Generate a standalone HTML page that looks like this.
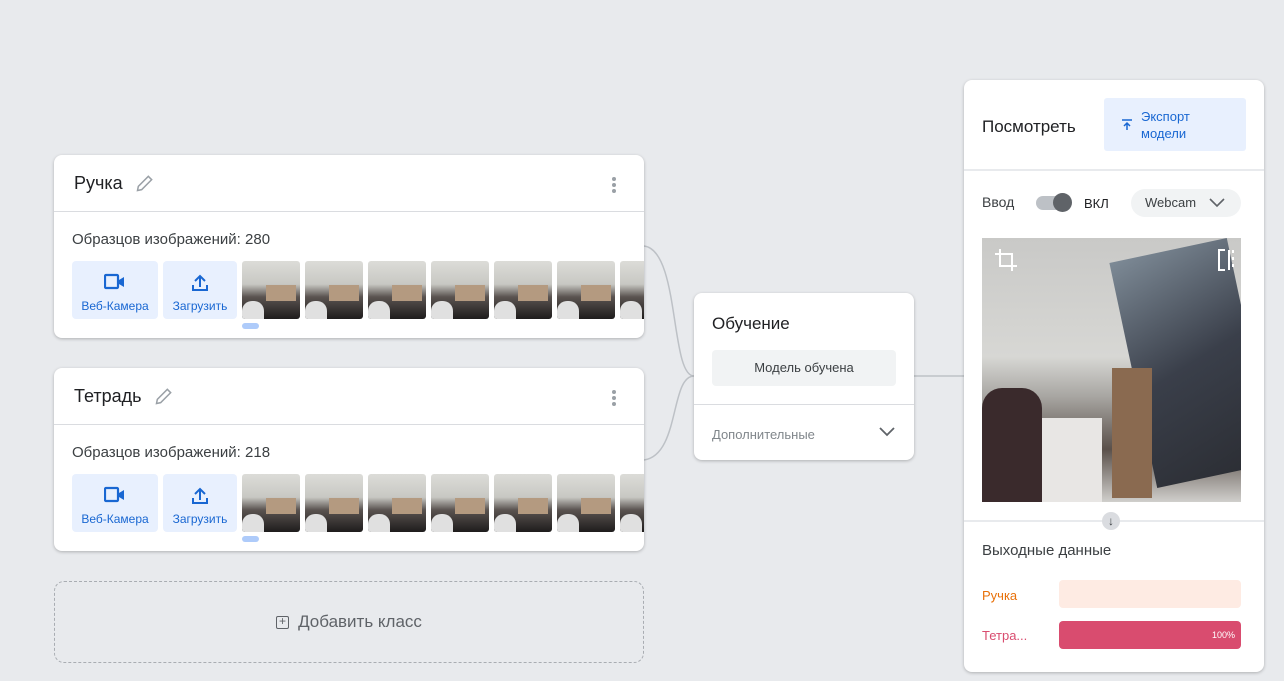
<!DOCTYPE html>
<html><head><meta charset="utf-8"><style>
*{box-sizing:border-box;margin:0;padding:0}
body{width:1284px;height:681px;background:#e8eaed;font-family:"Liberation Sans",sans-serif;position:relative;overflow:hidden;color:#202124}
.card{position:absolute;background:#fff;border-radius:8px;box-shadow:0 1px 3px rgba(0,0,0,.25)}
.cls{left:54px;width:590px;height:183px}
.hd{height:57px;border-bottom:1px solid #dadce0;padding:0 20px;display:flex;align-items:center;font-size:18px}
.dots{position:absolute;right:28px;top:22px;width:4px}
.dots i{display:block;width:4px;height:4px;border-radius:2px;background:#9aa0a6;margin-bottom:2px}
.cnt{position:absolute;left:18px;top:76px;font-size:15px;color:#3c4043}
.btn{position:absolute;top:106px;height:58px;background:#e8f0fe;border-radius:4px;color:#1967d2;font-size:12px;text-align:center}
.btn span{position:absolute;bottom:6px;left:0;right:0}
.thumbs{position:absolute;left:188px;top:106px;width:402px;height:58px;overflow:hidden;white-space:nowrap}
.th{display:inline-block;width:58px;height:58px;border-radius:3px;margin-right:5px;background:linear-gradient(180deg,#dcdcd8 0%,#c8c8c3 40%,#5a5350 62%,#1e1c1c 100%);position:relative;overflow:hidden}
.th:after{content:"";position:absolute;left:24px;top:24px;width:30px;height:16px;background:#b49a80}
.th:before{content:"";position:absolute;left:0;top:40px;width:22px;height:18px;background:#e0e0e0;border-radius:10px 10px 0 0}
.ind{position:absolute;left:188px;top:168px;width:17px;height:6px;border-radius:3px;background:#aecbfa}
</style></head><body>
<svg style="position:absolute;left:0;top:0" width="1284" height="681"><path d="M644 246 C680 250,670 376,694 376 M644 460 C680 455,670 376,694 376 M914 376 L964 376" stroke="#bdc1c6" stroke-width="1.5" fill="none"/></svg>

<div class="card cls" style="top:155px">
<div class="hd">Ручка <svg style="margin-left:12px" width="20" height="20" viewBox="0 0 24 24"><path d="M3 21l1-5L16 4l4 4L8 20z" fill="none" stroke="#9aa0a6" stroke-width="1.8"/></svg></div>
<div class="dots"><i></i><i></i><i></i></div>
<div class="cnt">Образцов изображений: 280</div>
<div class="btn" style="left:18px;width:86px"><svg style="margin-top:12px" width="22" height="18" viewBox="0 0 22 18"><rect x="1" y="2" width="13" height="13" rx="1" fill="none" stroke="#1967d2" stroke-width="2.2"/><path d="M15 7l5-3v10l-5-3z" fill="#1967d2"/></svg><span>Веб-Камера</span></div>
<div class="btn" style="left:109px;width:74px"><svg style="margin-top:12px" width="20" height="20" viewBox="0 0 20 20"><path d="M10 14V3M5 8l5-5 5 5M3 12v5h14v-5" fill="none" stroke="#1967d2" stroke-width="2"/></svg><span>Загрузить</span></div>
<div class="thumbs"><div class="th"></div><div class="th"></div><div class="th"></div><div class="th"></div><div class="th"></div><div class="th"></div><div class="th"></div></div>
<div class="ind"></div>
</div>

<div class="card cls" style="top:368px">
<div class="hd">Тетрадь <svg style="margin-left:12px" width="20" height="20" viewBox="0 0 24 24"><path d="M3 21l1-5L16 4l4 4L8 20z" fill="none" stroke="#9aa0a6" stroke-width="1.8"/></svg></div>
<div class="dots"><i></i><i></i><i></i></div>
<div class="cnt">Образцов изображений: 218</div>
<div class="btn" style="left:18px;width:86px"><svg style="margin-top:12px" width="22" height="18" viewBox="0 0 22 18"><rect x="1" y="2" width="13" height="13" rx="1" fill="none" stroke="#1967d2" stroke-width="2.2"/><path d="M15 7l5-3v10l-5-3z" fill="#1967d2"/></svg><span>Веб-Камера</span></div>
<div class="btn" style="left:109px;width:74px"><svg style="margin-top:12px" width="20" height="20" viewBox="0 0 20 20"><path d="M10 14V3M5 8l5-5 5 5M3 12v5h14v-5" fill="none" stroke="#1967d2" stroke-width="2"/></svg><span>Загрузить</span></div>
<div class="thumbs"><div class="th"></div><div class="th"></div><div class="th"></div><div class="th"></div><div class="th"></div><div class="th"></div><div class="th"></div></div>
<div class="ind"></div>
</div>

<div style="position:absolute;left:54px;top:581px;width:590px;height:82px;border:1.5px dashed #a9adb2;border-radius:10px;display:flex;align-items:center;justify-content:center;font-size:17px;color:#5f6368"><span style="display:inline-block;width:13px;height:13px;border:1.5px solid #5f6368;border-radius:2px;margin-right:9px;font-size:12px;line-height:9px;text-align:center">+</span>Добавить класс</div>

<div class="card" style="left:694px;top:293px;width:220px;height:167px">
<div style="position:absolute;left:18px;top:21px;font-size:17px">Обучение</div>
<div style="position:absolute;left:18px;top:57px;width:184px;height:36px;background:#f1f3f4;border-radius:4px;font-size:13px;color:#3c4043;text-align:center;line-height:36px">Модель обучена</div>
<div style="position:absolute;left:0;right:0;top:111px;border-top:1px solid #dadce0"></div>
<div style="position:absolute;left:18px;top:134px;font-size:13px;color:#80868b">Дополнительные</div>
<svg style="position:absolute;right:18px;top:133px" width="18" height="12" viewBox="0 0 18 12"><path d="M2 2l7 7 7-7" fill="none" stroke="#5f6368" stroke-width="1.8"/></svg>
</div>

<div class="card" style="left:964px;top:80px;width:300px;height:592px">
<div style="position:absolute;left:18px;top:37px;font-size:17px">Посмотреть</div>
<div style="position:absolute;left:140px;top:18px;width:142px;height:53px;background:#e8f0fe;border-radius:3px;color:#1967d2;font-size:13px"><svg style="position:absolute;left:17px;top:21px" width="12" height="12" viewBox="0 0 12 12"><path d="M1 1h10M6 11V4M3 7l3-3 3 3" fill="none" stroke="#1967d2" stroke-width="1.5"/></svg><div style="position:absolute;left:37px;top:10px;line-height:17px">Экспорт<br>модели</div></div>
<div style="position:absolute;left:0;right:0;top:89px;border-top:2px solid #e8eaed"></div>
<div style="position:absolute;left:18px;top:114px;font-size:14px;color:#3c4043">Ввод</div>
<div style="position:absolute;left:72px;top:116px;width:34px;height:14px;border-radius:7px;background:#bdc1c6"></div>
<div style="position:absolute;left:89px;top:113px;width:19px;height:19px;border-radius:50%;background:#5f6368"></div>
<div style="position:absolute;left:120px;top:116px;font-size:13px">ВКЛ</div>
<div style="position:absolute;left:167px;top:109px;width:110px;height:28px;border-radius:14px;background:#f1f3f4;font-size:13px;color:#3c4043;line-height:28px;padding-left:14px">Webcam<svg style="position:absolute;right:16px;top:9px" width="16" height="10" viewBox="0 0 16 10"><path d="M1 1l7 7 7-7" fill="none" stroke="#5f6368" stroke-width="1.6"/></svg></div>
<div style="position:absolute;left:18px;top:158px;width:259px;height:264px;overflow:hidden;background:linear-gradient(180deg,#c9c9c7 0%,#d7d7d4 45%,#a8a6a2 60%,#5a504a 80%,#d0cfcc 100%)">
<div style="position:absolute;left:150px;top:10px;width:120px;height:230px;background:linear-gradient(160deg,#7d8a96,#3a3f4a 50%,#2b2d33);transform:rotate(-12deg)"></div>
<div style="position:absolute;left:130px;top:130px;width:40px;height:130px;background:#8a6a50"></div>
<div style="position:absolute;left:0;top:150px;width:60px;height:114px;background:#3a2a2c;border-radius:20px 20px 0 0"></div>
<div style="position:absolute;left:60px;top:180px;width:60px;height:84px;background:#e8e6e4"></div>
<svg style="position:absolute;left:12px;top:10px" width="24" height="24" viewBox="0 0 24 24"><path d="M6 1v17h17M1 6h17v17" fill="none" stroke="#fff" stroke-width="2"/></svg>
<svg style="position:absolute;right:4px;top:10px" width="20" height="24" viewBox="0 0 20 24"><path d="M8 2H2v20h6M12 2v20M16 2v3M16 9v3M16 16v3" fill="none" stroke="#fff" stroke-width="2"/></svg>
</div>
<div style="position:absolute;left:0;right:0;top:440px;border-top:2px solid #e8eaed"></div>
<div style="position:absolute;left:138px;top:432px;width:18px;height:18px;border-radius:50%;background:#dadce0;text-align:center;font-size:12px;line-height:18px;color:#3c4043">↓</div>
<div style="position:absolute;left:18px;top:462px;font-size:15px;color:#3c4043">Выходные данные</div>
<div style="position:absolute;left:18px;top:508px;font-size:13px;color:#e8710a">Ручка</div>
<div style="position:absolute;left:95px;top:500px;width:182px;height:28px;border-radius:4px;background:#feebe3"></div>
<div style="position:absolute;left:18px;top:548px;font-size:13px;color:#d94c6f">Тетра...</div>
<div style="position:absolute;left:95px;top:541px;width:182px;height:28px;border-radius:4px;background:#d94c6f;color:#fff;font-size:9px;text-align:right;padding-right:6px;line-height:28px">100%</div>
</div>
</body></html>
